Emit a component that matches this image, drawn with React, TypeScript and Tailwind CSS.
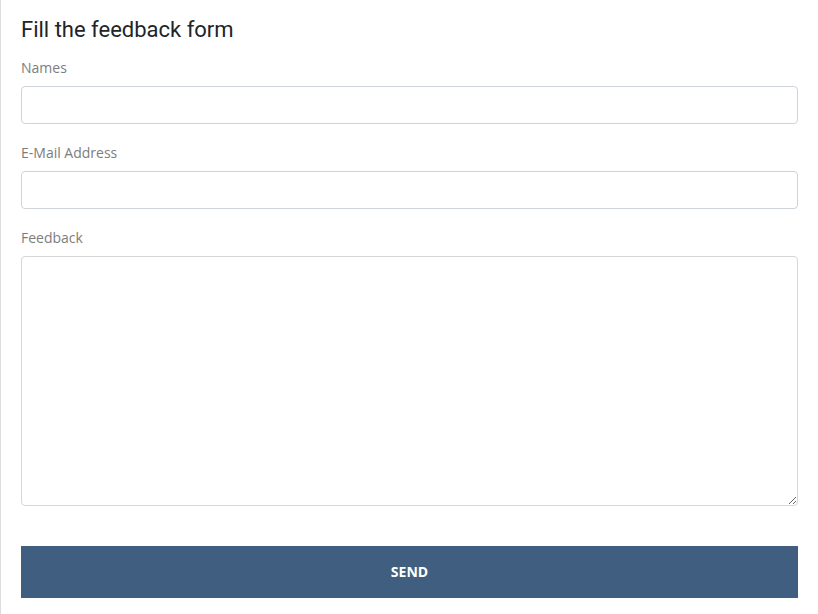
const fields = [
  { label: "Names", type: "text" },
  { label: "E-Mail Address", type: "email" },
];

export default function App() {
  return (
    <div className="min-h-[614px] bg-white border-l border-[#dcdcdc] pl-5 pr-5 pt-[17px]">
      <h1
        className="text-[22px] leading-[26px] text-[#212529] mb-[15px]"
        style={{ fontFamily: "Roboto, sans-serif" }}
      >
        Fill the feedback form
      </h1>
      <form
        className="flex flex-col"
        style={{ fontFamily: '"Open Sans", sans-serif' }}
        onSubmit={(e) => e.preventDefault()}
      >
        {fields.map(({ label, type }) => (
          <div key={label} className="flex flex-col mb-[19px]">
            <label className="text-[14px] leading-5 text-[#7d7d7d] mb-[8px]">
              {label}
            </label>
            <input
              type={type}
              className="h-[38px] rounded-[4px] border border-[#ced4da] px-3 text-[14px] outline-none"
            />
          </div>
        ))}
        <div className="flex flex-col">
          <label className="text-[14px] leading-5 text-[#7d7d7d] mb-[8px]">
            Feedback
          </label>
          <textarea className="h-[250px] rounded-[4px] border border-[#d6d6d6] px-3 py-2 text-[14px] outline-none" />
        </div>
        <button
          type="submit"
          className="mt-[40px] h-[52px] pb-[2px] bg-[#405f80] text-white text-[14px] font-bold"
        >
          SEND
        </button>
      </form>
    </div>
  );
}
